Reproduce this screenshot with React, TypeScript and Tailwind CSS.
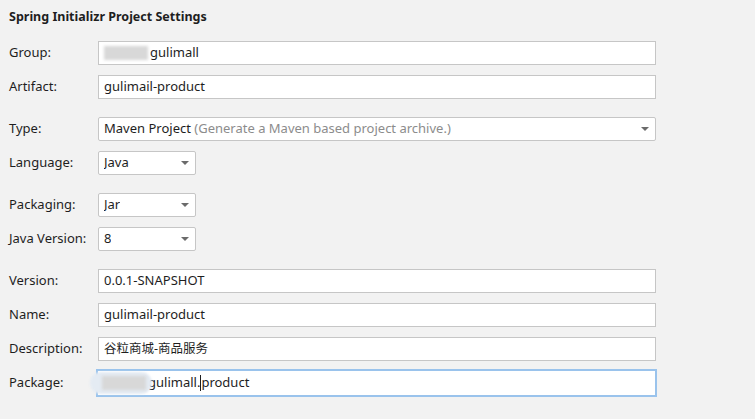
import React from 'react';

const FONT = '[font-family:"Noto_Sans","Open_Sans",sans-serif]';

// Blurred-out part of a value (redacted in the screenshot)
function Smudge({ halo = false }: { halo?: boolean }) {
  return (
    <span className="relative inline-block w-[44px] h-[14px] align-middle mr-[2px]">
      {halo && <span className="absolute -left-[12px] -top-[4px] w-[62px] h-[22px] rounded-full bg-[#e4ebf3] blur-[1px]" />}
      <span className="absolute left-0 top-0 w-[44px] h-[14px] bg-[#d8d8d8] blur-[1.5px]" />
    </span>
  );
}

function Arrow() {
  return (
    <svg width="8" height="4" viewBox="0 0 8 4" className="shrink-0">
      <path d="M0 0 L8 0 L4 4 Z" fill="#6b6b6b" />
    </svg>
  );
}

function Row({ label, children, className = '' }: { label: string; children: React.ReactNode; className?: string }) {
  return (
    <div className={`flex items-center h-[24px] ${className}`}>
      <div className="w-[89px] shrink-0 text-[#1e1e1e]">{label}</div>
      {children}
    </div>
  );
}

function TextBox({ children, focused = false }: { children: React.ReactNode; focused?: boolean }) {
  return (
    <div
      className={
        focused
          ? 'w-[561px] h-[28px] -ml-[2px] border-2 border-[#9ac3ec] bg-white flex items-center pl-[4px] text-[#1e1e1e]'
          : 'w-[558px] h-[24px] border border-[#c6c6c6] bg-white flex items-center pl-[5px] text-[#1e1e1e]'
      }
    >
      {children}
    </div>
  );
}

function Select({ children, wide = false }: { children: React.ReactNode; wide?: boolean }) {
  return (
    <div
      className={`${wide ? 'w-[558px]' : 'w-[98px]'} h-[24px] border border-[#c6c6c6] rounded-[2px] bg-white flex items-center justify-between pl-[5px] pr-[6px] text-[#1e1e1e]`}
    >
      <span className="truncate">{children}</span>
      <Arrow />
    </div>
  );
}

export default function App() {
  return (
    <div className={`w-[755px] h-[419px] bg-[#f2f2f2] pl-[9px] pt-[8px] text-[13px] ${FONT}`}>
      <div className="font-bold text-[12.5px] leading-[18px] text-[#1e1e1e]">Spring Initializr Project Settings</div>

      <Row label="Group:" className="mt-[15px]">
        <TextBox>
          <Smudge />
          gulimall
        </TextBox>
      </Row>
      <Row label="Artifact:" className="mt-[10px]">
        <TextBox>gulimail-product</TextBox>
      </Row>

      <Row label="Type:" className="mt-[18px]">
        <Select wide>
          Maven Project <span className="text-[#8c8c8c]">(Generate a Maven based project archive.)</span>
        </Select>
      </Row>
      <Row label="Language:" className="mt-[10px]">
        <Select>Java</Select>
      </Row>

      <Row label="Packaging:" className="mt-[18px]">
        <Select>Jar</Select>
      </Row>
      <Row label="Java Version:" className="mt-[10px]">
        <Select>8</Select>
      </Row>

      <Row label="Version:" className="mt-[18px]">
        <TextBox>0.0.1-SNAPSHOT</TextBox>
      </Row>
      <Row label="Name:" className="mt-[10px]">
        <TextBox>gulimail-product</TextBox>
      </Row>
      <Row label="Description:" className="mt-[10px]">
        <TextBox>
          <span className='[font-family:"Noto_Sans","Noto_Sans_CJK_SC",sans-serif] text-[12.5px]'>谷粒商城-商品服务</span>
        </TextBox>
      </Row>
      <Row label="Package:" className="mt-[10px]">
        <TextBox focused>
          <Smudge halo />
          gulimall.
          <span className="inline-block w-px h-[16px] bg-[#1e1e1e]" />
          product
        </TextBox>
      </Row>
    </div>
  );
}
